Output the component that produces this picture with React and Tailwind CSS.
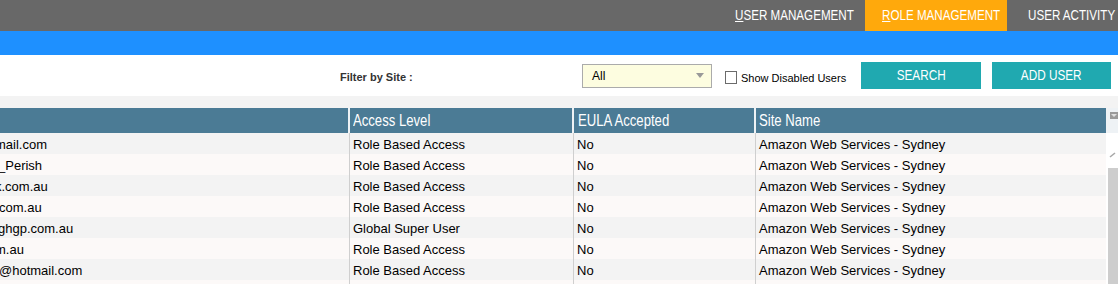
import React from "react";

const rows = [
  { e: "mail.com", off: "ml-[-5px]", a: "Role Based Access" },
  { e: "_Perish", off: "ml-[-2px]", a: "Role Based Access" },
  { e: "k.com.au", off: "ml-[-5px]", a: "Role Based Access" },
  { e: "com.au", off: "ml-[-1px]", a: "Role Based Access" },
  { e: "ghgp.com.au", off: "ml-[-2px]", a: "Global Super User" },
  { e: "m.au", off: "ml-[-5px]", a: "Role Based Access" },
  { e: "@hotmail.com", off: "ml-[-1px]", a: "Role Based Access" },
  { e: "", off: "", a: "" },
];

export default function App() {
  return (
    <div className="w-[1118px] h-[284px] overflow-hidden bg-white font-['Liberation_Sans',Arial,sans-serif]">
      {/* top nav */}
      <div className="h-[31px] bg-[#686868] flex justify-end text-white text-[14px]">
        <div className="w-[147px] pl-[17px] flex items-center whitespace-nowrap">
          <span className="inline-block origin-left scale-x-[0.83] -mt-[1px]">
            <span className="underline">U</span>SER MANAGEMENT
          </span>
        </div>
        <div className="w-[142px] pl-[17px] flex items-center whitespace-nowrap bg-[#ffa90c]">
          <span className="inline-block origin-left scale-x-[0.83] -mt-[1px]">
            <span className="underline">R</span>OLE MANAGEMENT
          </span>
        </div>
        <div className="w-[111px] pl-[21px] flex items-center whitespace-nowrap overflow-hidden">
          <span className="inline-block origin-left scale-x-[0.83] -mt-[1px]">USER ACTIVITY</span>
        </div>
      </div>
      <div className="h-[24px] bg-[#1e90ff]" />

      {/* filter row */}
      <div className="h-[41px] flex items-center pl-[340px]">
        <div className="w-[242px] text-[11px] font-bold text-[#333] mt-[3px]">Filter by Site :</div>
        <div className="w-[130px] h-[24px] border border-[#ababab] bg-[#fdfde0] flex items-center justify-between pl-[9px] pr-[7px]">
          <span className="text-[12px] text-black">All</span>
          <svg width="8" height="5" viewBox="0 0 8 5"><path d="M0 0 L8 0 L4 5 Z" fill="#999" /></svg>
        </div>
        <div className="w-[149px] pl-[13px] flex items-center">
          <div className="w-[12px] h-[13px] border border-[#6b6b6b] bg-white mt-[4px]" />
          <span className="ml-[4px] text-[11px] text-black mt-[5px] whitespace-nowrap">Show Disabled Users</span>
        </div>
        <div className="w-[120px] h-[27px] bg-[#20a9b0] text-white text-[14px] flex items-center justify-center">
          <span className="inline-block scale-x-[0.84]">SEARCH</span>
        </div>
        <div className="ml-[11px] w-[119px] h-[27px] bg-[#20a9b0] text-white text-[14px] flex items-center justify-center">
          <span className="inline-block scale-x-[0.84] whitespace-nowrap">ADD USER</span>
        </div>
      </div>
      <div className="h-[12px] bg-[#f3f3f3]" />

      {/* table */}
      <div className="flex">
        <div className="w-[1106px]">
          <div className="h-[25px] flex gap-[2px] bg-[#eef2f5] text-white text-[16px]">
            <div className="w-[348px] bg-[#4b7b95]" />
            <div className="w-[222px] bg-[#4b7b95] pl-[3px] flex items-center whitespace-nowrap">
              <span className="inline-block origin-left scale-x-[0.82]">Access Level</span>
            </div>
            <div className="w-[180px] bg-[#4b7b95] pl-[4px] flex items-center whitespace-nowrap">
              <span className="inline-block origin-left scale-x-[0.82]">EULA Accepted</span>
            </div>
            <div className="w-[350px] bg-[#4b7b95] pl-[3px] flex items-center whitespace-nowrap">
              <span className="inline-block origin-left scale-x-[0.82]">Site Name</span>
            </div>
          </div>
          {rows.map((r, i) => (
            <div
              key={i}
              className={`h-[21px] flex text-[13px] text-black pt-[3px] ${i % 2 === 0 ? "bg-[#f3f3f3]" : "bg-[#fcf9f8]"}`}
            >
              <div className="w-[350px] border-r border-[#cfcfcf] -mt-[3px] pt-[3px] overflow-hidden flex items-center whitespace-nowrap">
                <span className={r.off}>{r.e}</span>
              </div>
              <div className="w-[224px] border-r border-[#cfcfcf] -mt-[3px] pt-[3px] pl-[3px] flex items-center whitespace-nowrap">{r.a}</div>
              <div className="w-[182px] border-r border-[#cfcfcf] -mt-[3px] pt-[3px] pl-[3px] flex items-center">{r.a ? "No" : ""}</div>
              <div className="flex-1 -mt-[3px] pt-[3px] pl-[3px] flex items-center whitespace-nowrap">{r.a ? "Amazon Web Services - Sydney" : ""}</div>
            </div>
          ))}
        </div>
        {/* scrollbar */}
        <div className="w-[12px] flex flex-col">
          <div className="h-[25px] bg-[#eef2f5] pl-[4px] pt-[4px]">
            <div className="w-[8px] h-[7px] bg-[#9a9a9a] flex items-center justify-center">
              <svg width="6" height="3" viewBox="0 0 6 3"><path d="M0 0 L6 0 L3 3 Z" fill="#e0e0e0" /></svg>
            </div>
          </div>
          <div className="h-[35px] bg-white pl-[3px] pt-[19px]">
            <svg width="8" height="6" viewBox="0 0 8 6"><path d="M1 5 L6 1" stroke="#a8a8a8" strokeWidth="1.6" fill="none" /></svg>
          </div>
          <div className="flex-1 bg-white pl-[2px]">
            <div className="h-full bg-[#cdcdcd]" />
          </div>
        </div>
      </div>
    </div>
  );
}
